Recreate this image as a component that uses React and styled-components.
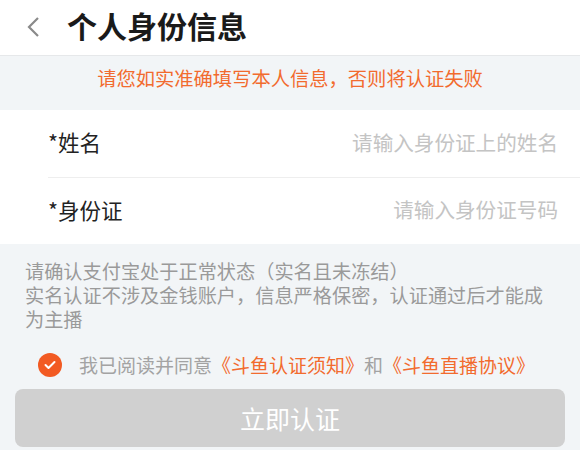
import React from 'react';
import styled, { createGlobalStyle } from 'styled-components';

const GlobalStyle = createGlobalStyle`
  html, body {
    margin: 0;
    padding: 0;
    background: #f2f5f7;
  }
  body {
    font-family: "Noto Sans CJK SC", "Noto Sans", sans-serif;
  }
`;

const ORANGE = '#f26b2e';

const Page = styled.div`
  width: 580px;
  height: 450px;
  overflow: hidden;
  background: #f2f5f7;
  display: flex;
  flex-direction: column;
`;

const Header = styled.div`
  height: 56px;
  box-sizing: border-box;
  background: #fff;
  border-bottom: 1px solid #e6e8ea;
  display: flex;
  align-items: center;
  padding-left: 26px;
  gap: 25px;
`;

const BackButton = styled.div`
  width: 16px;
  height: 22px;
  display: flex;
  align-items: center;
  margin-top: -2px;
`;

const Title = styled.h1`
  margin: 0;
  font-size: 30px;
  font-weight: 700;
  color: #1a1a1a;
  line-height: 1;
  margin-top: -6px;
`;

const Notice = styled.div`
  height: 54px;
  display: flex;
  align-items: center;
  justify-content: center;
  color: ${ORANGE};
  font-size: 19.3px;
  padding-bottom: 10px;
  box-sizing: border-box;
`;

const Form = styled.div`
  background: #fff;
  padding-left: 48px;
`;

const Row = styled.div`
  height: ${p => p.$height}px;
  display: flex;
  align-items: center;
  justify-content: space-between;
  padding-right: 22px;
  box-sizing: border-box;
  border-bottom: ${p => (p.$divider ? '1px solid #eeeeee' : 'none')};
  padding-bottom: 4px;
`;

const Label = styled.span`
  font-size: 21.5px;
  color: #222;
`;

const Placeholder = styled.span`
  font-size: 20.6px;
  color: #c4c4c4;
`;

const Tips = styled.div`
  padding: 15px 20px 0 25px;
  font-size: 19.2px;
  line-height: 24px;
  color: #9a9a9a;
`;

const Agreement = styled.div`
  display: flex;
  align-items: center;
  gap: 17px;
  padding-left: 38px;
  margin-top: 20px;
  font-size: 19px;
  color: #a3a3a3;
`;

const Check = styled.div`
  width: 24px;
  height: 24px;
  border-radius: 50%;
  background: #f25a22;
  display: flex;
  align-items: center;
  justify-content: center;
`;

const Link = styled.span`
  color: ${ORANGE};
`;

const Submit = styled.button`
  margin: 11px 15px 0;
  height: 58px;
  border: none;
  border-radius: 8px;
  background: #d0d0d0;
  color: #fff;
  font-family: inherit;
  font-size: 25px;
  padding: 0;
`;

export default function App() {
  return (
    <Page>
      <GlobalStyle />
      <Header>
        <BackButton>
          <svg width="14" height="22" viewBox="0 0 14 22">
            <path d="M12 2 L3 11 L12 20" fill="none" stroke="#8a8a8a" strokeWidth="2.2" />
          </svg>
        </BackButton>
        <Title>个人身份信息</Title>
      </Header>
      <Notice>请您如实准确填写本人信息，否则将认证失败</Notice>
      <Form>
        <Row $height={68} $divider>
          <Label>*姓名</Label>
          <Placeholder>请输入身份证上的姓名</Placeholder>
        </Row>
        <Row $height={66}>
          <Label>*身份证</Label>
          <Placeholder>请输入身份证号码</Placeholder>
        </Row>
      </Form>
      <Tips>
        请确认支付宝处于正常状态（实名且未冻结）
        <br />
        实名认证不涉及金钱账户，信息严格保密，认证通过后才能成为主播
      </Tips>
      <Agreement>
        <Check>
          <svg width="12" height="10" viewBox="0 0 12 10">
            <path d="M1.5 5 L4.5 8 L10.5 2" fill="none" stroke="#fff" strokeWidth="2" strokeLinecap="round" strokeLinejoin="round" />
          </svg>
        </Check>
        <span>
          我已阅读并同意<Link>《斗鱼认证须知》</Link>和<Link>《斗鱼直播协议》</Link>
        </span>
      </Agreement>
      <Submit>立即认证</Submit>
    </Page>
  );
}
